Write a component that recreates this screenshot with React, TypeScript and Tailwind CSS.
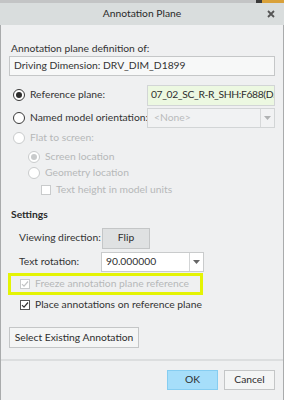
import React from "react";

function Radio({ checked, disabled }: { checked?: boolean; disabled?: boolean }) {
  const ring = disabled ? "border-[#c9cbcc]" : "border-[#3a3a3a]";
  const dot = disabled ? "bg-[#c9cbcc]" : "bg-[#2d2d2d]";
  return (
    <span className={`flex h-[12px] w-[12px] shrink-0 items-center justify-center rounded-full border bg-white ${ring}`}>
      {checked && <span className={`h-[6px] w-[6px] rounded-full ${dot}`} />}
    </span>
  );
}

function Check({ checked, disabled }: { checked?: boolean; disabled?: boolean }) {
  const box = disabled ? "border-[#c9cbcc]" : "border-[#555]";
  const tick = disabled ? "#c2c4c5" : "#333";
  return (
    <span className={`flex h-[10px] w-[10px] shrink-0 items-center justify-center border bg-white ${box}`}>
      {checked && (
        <svg width="8" height="8" viewBox="0 0 8 8">
          <path d="M1 4.2 L3 6.2 L7 1.5" fill="none" stroke={tick} strokeWidth="1.2" />
        </svg>
      )}
    </span>
  );
}

function Caret({ color = "#666" }: { color?: string }) {
  return (
    <svg width="7" height="4" viewBox="0 0 7 4">
      <path d="M0 0 H7 L3.5 4 Z" fill={color} />
    </svg>
  );
}

export default function App() {
  return (
    <div
      className="h-[400px] w-[284px] overflow-hidden whitespace-nowrap bg-[#eff0f1] text-[10.3px] text-[#333]"
      style={{ fontFamily: 'Lato, "Noto Sans", sans-serif' }}
    >
      {/* top strip */}
      <div className="flex h-[3px] bg-[#c3c4c5]">
        <div className="flex-1" />
        <div className="w-[6px] bg-[#3b3b3b]" />
        <div className="w-[22px] bg-[#d9a13a]" />
      </div>

      {/* title bar */}
      <div className="relative flex h-[22px] items-center justify-center bg-[#d9dddd] text-[10.3px] text-[#2a2a2a]">
        Annotation Plane
        <svg className="absolute right-[9px] top-[7px]" width="8" height="8" viewBox="0 0 8 8">
          <path d="M1 1 L7 7 M7 1 L1 7" stroke="#555" strokeWidth="1.8" />
        </svg>
      </div>

      <div className="h-[375px] border-x border-[#a9abac]">
        <div className="px-[8px] pt-[16px]">
          <div className="h-[15px] pl-[2px] leading-[15px]">Annotation plane definition of:</div>
          <div className="flex h-[20px] items-center border border-[#c5c7c8] bg-[#f7f8f8] pl-[4px]">
            Driving Dimension: DRV_DIM_D1899
          </div>

          {/* orientation */}
          <div className="mt-[8px] flex h-[22px] items-center">
            <div className="flex w-[138px] items-center gap-[5px] pl-[4px]">
              <Radio checked />
              <span>Reference plane:</span>
            </div>
            <div className="flex h-[21px] min-w-0 flex-1 items-center overflow-hidden border border-[#d2d5d6] bg-[#ecf8e1] pl-[3px] tracking-[-0.35px] text-[#2e2e2e]">
              07_02_SC_R-R_SHH:F688(D<span className="text-[#b5c2aa]">A</span>
            </div>
          </div>
          <div className="mt-[1px] flex h-[21px] items-center">
            <div className="flex w-[138px] items-center gap-[5px] pl-[4px]">
              <Radio />
              <span>Named model orientation:</span>
            </div>
            <div className="flex h-[20px] flex-1 items-center border border-[#d2d5d6] bg-[#f1f2f3]">
              <span className="flex-1 pl-[6px] text-[#b9bbbc]">&lt;None&gt;</span>
              <span className="flex h-full w-[14px] items-center justify-center border-l border-[#d6d8d9]">
                <Caret color="#b0b2b3" />
              </span>
            </div>
          </div>
          <div className="flex h-[20px] items-center gap-[5px] pl-[4px] text-[#b6b8b9]">
            <Radio disabled />
            <span>Flat to screen:</span>
          </div>
          <div className="flex h-[17px] items-center gap-[5px] pl-[19px] text-[#b6b8b9]">
            <Radio checked disabled />
            <span>Screen location</span>
          </div>
          <div className="flex h-[16px] items-center gap-[5px] pl-[19px] text-[#b6b8b9]">
            <Radio disabled />
            <span>Geometry location</span>
          </div>
          <div className="flex h-[17px] items-center gap-[5px] pl-[32px] text-[#b6b8b9]">
            <Check disabled />
            <span>Text height in model units</span>
          </div>

          {/* settings */}
          <div className="mt-[8px] h-[16px] pl-[2px] font-bold leading-[16px] text-[#2a2a2a]">Settings</div>
          <div className="mt-[5px] flex h-[22px] items-center">
            <span className="w-[93px] pl-[10px]">Viewing direction:</span>
            <button className="flex h-[21px] w-[48px] items-center justify-center border border-[#c4c6c7] bg-[#dfe1e2] text-[#2e2e2e]">
              Flip
            </button>
          </div>
          <div className="mt-[3px] flex h-[20px] items-center">
            <span className="w-[92px] pl-[10px]">Text rotation:</span>
            <div className="flex h-[20px] w-[103px] items-center border border-[#c9cbcc] bg-white">
              <span className="flex-1 pl-[4px] text-[#2e2e2e]">90.000000</span>
              <span className="flex h-full w-[14px] items-center justify-center border-l border-[#d3d5d6]">
                <Caret />
              </span>
            </div>
          </div>

          <div className="ml-[-1px] mt-[1px] flex h-[22px] w-[195px] items-center gap-[5px] border-[3px] border-[#e4f404] pl-[9px] text-[#b6b8b9]">
            <Check checked disabled />
            <span>Freeze annotation plane reference</span>
          </div>
          <div className="flex h-[20px] items-center gap-[5px] pl-[11px]">
            <Check checked />
            <span>Place annotations on reference plane</span>
          </div>

          <button className="mt-[12px] flex h-[21px] w-[130px] items-center justify-center border border-[#c4c6c7] bg-[#f4f5f5] text-[#2e2e2e]">
            Select Existing Annotation
          </button>
        </div>

        <div className="mt-[11px] h-[2px] bg-[#dcdedf]" />

        <div className="flex justify-end gap-[6px] pr-[8px] pt-[9px]">
          <button className="flex h-[20px] w-[51px] items-center justify-center border border-[#86cdf1] bg-[#a6defa] text-[#2e2e2e]">
            OK
          </button>
          <button className="flex h-[20px] w-[51px] items-center justify-center border border-[#c4c6c7] bg-[#f4f5f5] text-[#2e2e2e]">
            Cancel
          </button>
        </div>
      </div>
    </div>
  );
}
